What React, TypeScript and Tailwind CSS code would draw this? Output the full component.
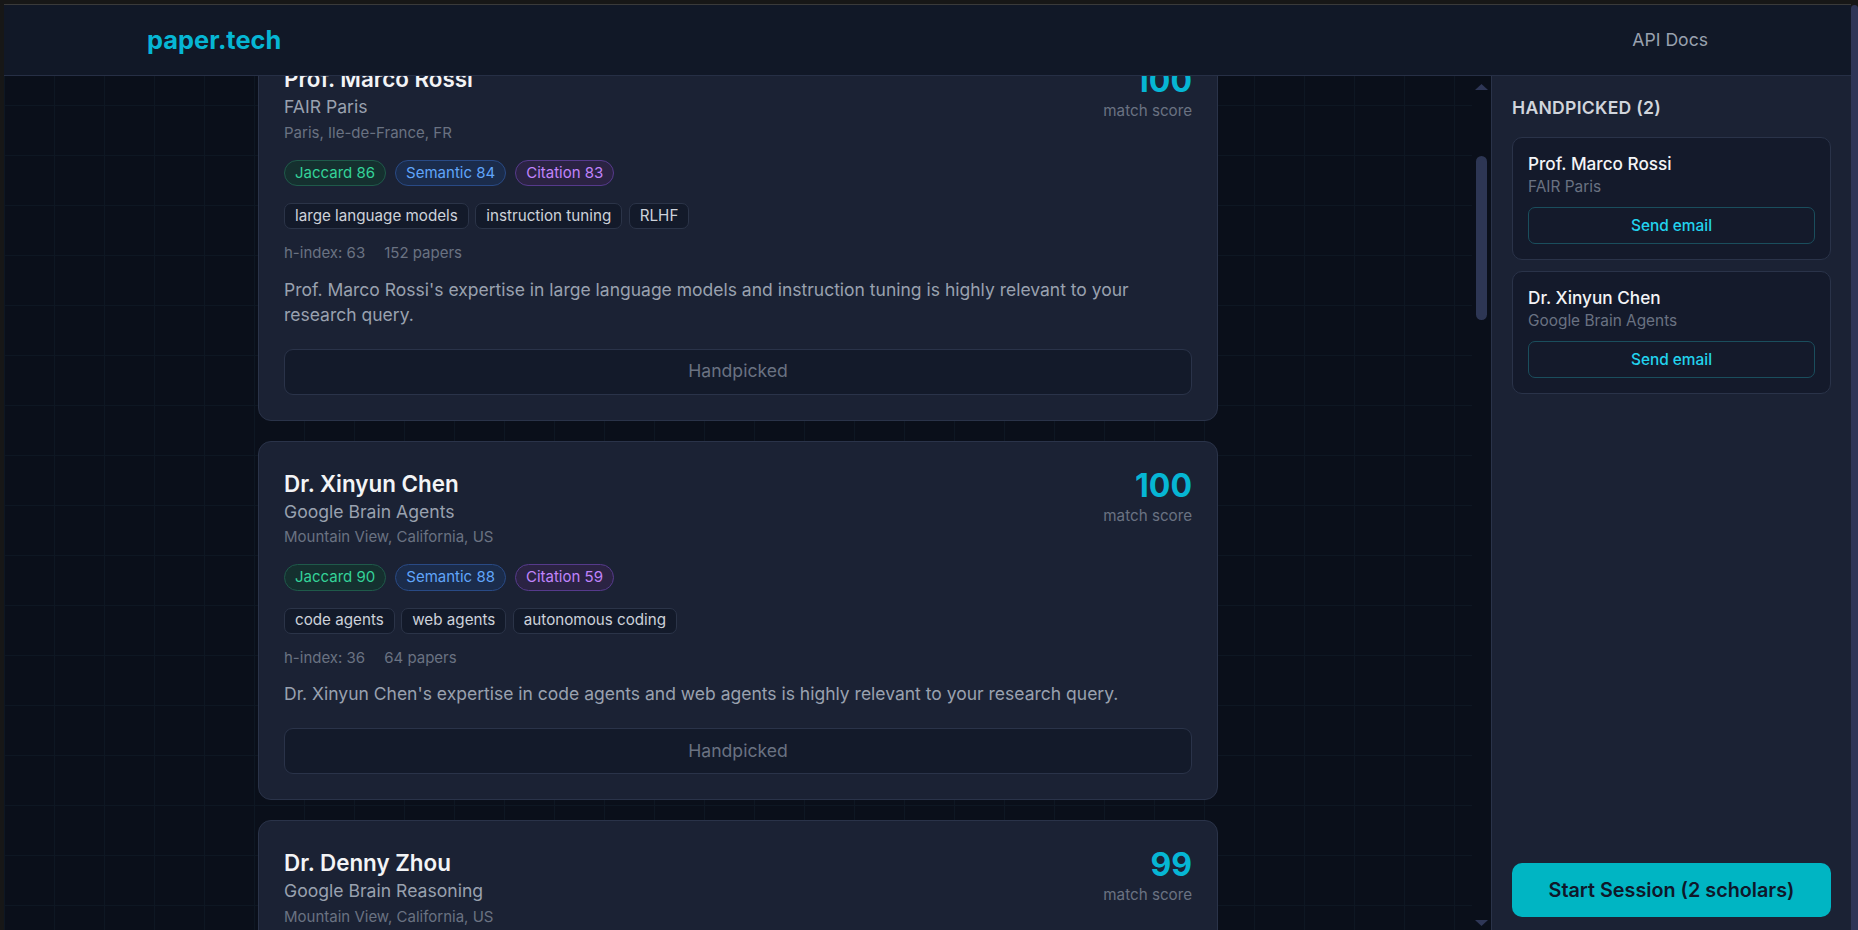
import React from "react";

type Scholar = {
  name: string;
  affil: string;
  location: string;
  score: number;
  jaccard: number;
  semantic: number;
  citation: number;
  tags: string[];
  hindex: number;
  papers: number;
  desc: string;
};

const scholars: Scholar[] = [
  {
    name: "Prof. Marco Rossi",
    affil: "FAIR Paris",
    location: "Paris, Ile-de-France, FR",
    score: 100,
    jaccard: 86,
    semantic: 84,
    citation: 83,
    tags: ["large language models", "instruction tuning", "RLHF"],
    hindex: 63,
    papers: 152,
    desc: "Prof. Marco Rossi's expertise in large language models and instruction tuning is highly relevant to your research query.",
  },
  {
    name: "Dr. Xinyun Chen",
    affil: "Google Brain Agents",
    location: "Mountain View, California, US",
    score: 100,
    jaccard: 90,
    semantic: 88,
    citation: 59,
    tags: ["code agents", "web agents", "autonomous coding"],
    hindex: 36,
    papers: 64,
    desc: "Dr. Xinyun Chen's expertise in code agents and web agents is highly relevant to your research query.",
  },
  {
    name: "Dr. Denny Zhou",
    affil: "Google Brain Reasoning",
    location: "Mountain View, California, US",
    score: 99,
    jaccard: 88,
    semantic: 91,
    citation: 72,
    tags: ["chain-of-thought", "reasoning", "large language models"],
    hindex: 58,
    papers: 120,
    desc: "Dr. Denny Zhou's expertise in chain-of-thought and reasoning is highly relevant to your research query.",
  },
];

function Card({ s }: { s: Scholar }) {
  return (
    <div className="rounded-[13px] border border-[#2a3349] bg-[#1b2234] px-[25px] pt-[26px] pb-[25px]">
      <div className="flex justify-between">
        <div>
          <div className="text-[22.4px] font-semibold leading-[31px] text-gray-100">{s.name}</div>
          <div className="text-[17.6px] leading-[26px] text-gray-400">{s.affil}</div>
          <div className="mt-[1.5px] text-[15px] leading-[22px] text-gray-500">{s.location}</div>
        </div>
        <div className="text-right">
          <div className="text-[32px] font-bold leading-[36px] text-[#06b6d4]">{s.score}</div>
          <div className="mt-[1px] text-[15.2px] leading-[22px] text-gray-500">match score</div>
        </div>
      </div>
      <div className="mt-[16px] flex gap-[9px] text-[15px]">
        <span className="flex h-[26.5px] items-center rounded-full border border-[#1f5a4a] bg-[#15302f] px-[10px] text-[#34d399]">
          Jaccard {s.jaccard}
        </span>
        <span className="flex h-[26.5px] items-center rounded-full border border-[#294a85] bg-[#1b2c4b] px-[10px] text-[#60a5fa]">
          Semantic {s.semantic}
        </span>
        <span className="flex h-[26.5px] items-center rounded-full border border-[#563a8c] bg-[#2b2343] px-[10px] text-[#c084fc]">
          Citation {s.citation}
        </span>
      </div>
      <div className="mt-[17px] flex gap-[6.5px] text-[15.2px]">
        {s.tags.map((t) => (
          <span
            key={t}
            className="flex h-[26px] items-center rounded-[7px] border border-[#2b3448] bg-[#131a2a] px-[10px] text-[#cdd2da]"
          >
            {t}
          </span>
        ))}
      </div>
      <div className="mt-[13px] flex gap-[19px] text-[15px] leading-[22px] text-gray-500">
        <span>h-index: {s.hindex}</span>
        <span>{s.papers} papers</span>
      </div>
      <p className="mt-[12.5px] text-[17.5px] leading-[25px] text-gray-400">{s.desc}</p>
      <div className="mt-[22px] flex h-[46px] items-center justify-center rounded-[9px] border border-[#2a3349] bg-[#131a2a] text-[17.6px] text-gray-500">
        Handpicked
      </div>
    </div>
  );
}

function SideCard({ name, affil }: { name: string; affil: string }) {
  return (
    <div className="rounded-[10px] border border-[#2a3349] bg-[#141a2b] p-[15px]">
      <div className="text-[17.2px] font-medium leading-[21px] text-gray-100">{name}</div>
      <div className="mt-[2px] text-[15.4px] leading-[22px] text-gray-500">{affil}</div>
      <div className="mt-[9px] flex h-[37px] items-center justify-center rounded-[7px] border border-[#1a4e5d] text-[15.4px] font-medium text-[#22d3ee]">
        Send email
      </div>
    </div>
  );
}

export default function App() {
  return (
    <div className="flex h-[930px] w-full overflow-hidden bg-[#171717] font-[Inter,sans-serif]">
      <div className="w-[4px] shrink-0 bg-[#171717]" />
      <div className="flex min-w-0 flex-1 flex-col">
        <div className="h-[4px] shrink-0 bg-[#171717]" />
        <div className="h-px shrink-0 bg-[#3a3a3a]" />
        <header className="flex h-[71px] shrink-0 items-center justify-between border-b border-[#262f45] bg-[#111827] px-[143px]">
          <div className="text-[25.4px] font-bold text-[#06b6d4]">paper.tech</div>
          <div className="text-[17.6px] text-gray-400">API Docs</div>
        </header>
        <div className="flex min-h-0 flex-1">
          <div className="min-w-0 flex-1 overflow-hidden bg-[#0a0f1a] bg-[linear-gradient(to_right,#0e1723_1px,transparent_1px),linear-gradient(to_bottom,#0e1723_1px,transparent_1px)] bg-size-[50px_50px] bg-position-[0px_29px]">
            <div className="mx-auto mt-[-40px] flex w-[960px] flex-col gap-[20px]">
              {scholars.map((s) => (
                <Card key={s.name} s={s} />
              ))}
            </div>
          </div>
          <div className="flex w-[19px] shrink-0 flex-col items-start bg-[#0a0f1a] pl-[3px]">
            <svg width="13" height="6" viewBox="0 0 13 6" className="mt-[8px]">
              <polygon points="6.5,0 13,6 0,6" fill="#2e3656" />
            </svg>
            <div className="ml-[1px] mt-[66px] h-[164px] w-[11px] rounded-full bg-[#2d3654]" />
            <svg width="13" height="6" viewBox="0 0 13 6" className="mb-[4px] mt-auto">
              <polygon points="0,0 13,0 6.5,6" fill="#2e3656" />
            </svg>
          </div>
          <aside className="flex w-[360px] shrink-0 flex-col border-l border-[#2a3349] bg-[#1b2234] px-5 pt-[19px] pb-[13px]">
            <div className="text-[17.6px] font-semibold leading-[26px] tracking-[0.015em] text-gray-300">
              HANDPICKED (2)
            </div>
            <div className="mt-4 flex flex-col gap-[11px]">
              <SideCard name="Prof. Marco Rossi" affil="FAIR Paris" />
              <SideCard name="Dr. Xinyun Chen" affil="Google Brain Agents" />
            </div>
            <div className="mt-auto flex h-[54px] items-center justify-center rounded-[10px] bg-[#00b5c3] pt-[2px] text-[19.8px] font-semibold text-[#0f172a]">
              Start Session (2 scholars)
            </div>
          </aside>
        </div>
      </div>
      <div className="flex w-[7px] shrink-0 flex-col bg-[#171717]">
        <div className="h-[5px] shrink-0" />
        <div className="flex-1 rounded-t-full bg-[#2e3556]" />
      </div>
    </div>
  );
}
